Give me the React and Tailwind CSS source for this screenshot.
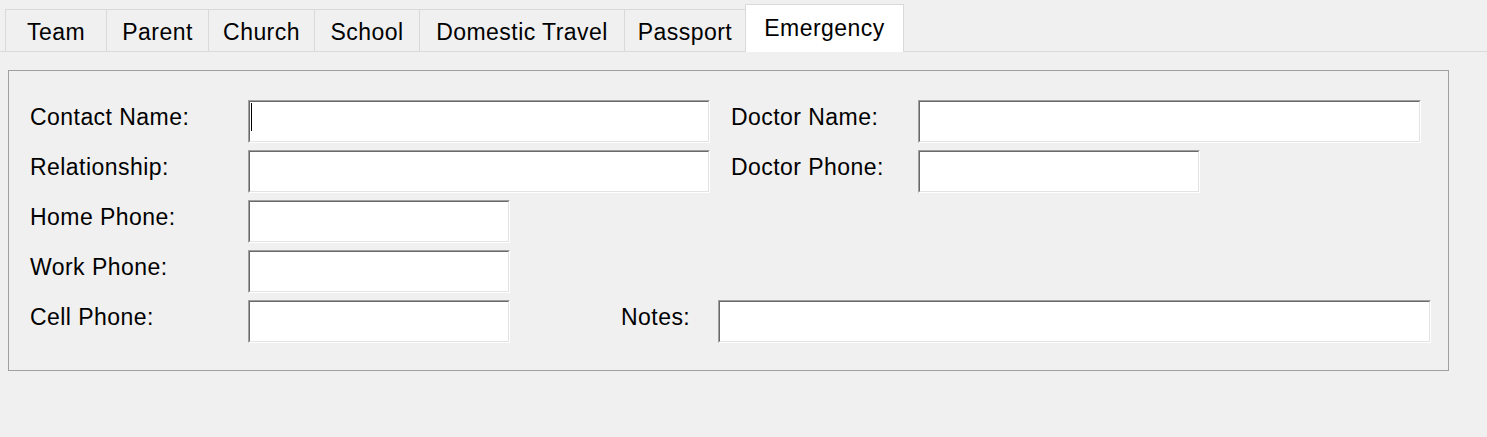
const tabs = [
  { name: 'Team', w: 'w-[101px]' },
  { name: 'Parent', w: 'w-[102px]' },
  { name: 'Church', w: 'w-[106px]' },
  { name: 'School', w: 'w-[105px]' },
  { name: 'Domestic Travel', w: 'w-[205px]' },
  { name: 'Passport', w: 'w-[121px]' },
];

// sunken 3D text box like a classic Windows edit control
const Field = ({ w, caret = false }) => (
  <div className={`${w} h-[43px] shrink-0 border-t border-l border-[#a0a0a0] border-b-white border-r-white border-b border-r`}>
    <div className="h-full w-full bg-white border-t border-l border-[#696969] border-b border-r border-b-[#e3e3e3] border-r-[#e3e3e3] pl-[1px] pt-[1px]">
      {caret && <div className="w-px h-[28px] bg-black" />}
    </div>
  </div>
);

const Label = ({ children, w }) => (
  <div className={`${w} shrink-0 pb-[8px] leading-none`}>{children}</div>
);

export default function App() {
  return (
    <div
      className="w-[1487px] h-[437px] bg-[#f0f0f0] text-black text-[23px] tracking-[0.45px] overflow-hidden"
      style={{ fontFamily: '"Liberation Sans", Arial, sans-serif' }}
    >
      {/* tab strip */}
      <div className="flex items-end h-[52px] pl-[5px] border-b border-[#dadada]">
        {tabs.map((t) => (
          <div
            key={t.name}
            className={`${t.w} h-[42px] shrink-0 flex items-center justify-center border-t border-l border-[#d9d9d9] pt-[3px] leading-none`}
          >
            {t.name}
          </div>
        ))}
        <div className="w-[159px] h-[48px] -mb-px shrink-0 flex items-start justify-center bg-white border-t border-l border-r border-[#d9d9d9] pt-[12px] leading-none">
          Emergency
        </div>
      </div>

      {/* group box */}
      <div className="ml-[8px] mt-[18px] w-[1441px] h-[301px] border border-[#a0a0a0] pl-[21px] pt-[29px]">
        <div className="flex flex-col gap-[7px]">
          <div className="flex items-center">
            <Label w="w-[218px]">Contact Name:</Label>
            <Field w="w-[462px]" caret />
            <div className="w-[21px]" />
            <Label w="w-[187px]">Doctor Name:</Label>
            <Field w="w-[503px]" />
          </div>
          <div className="flex items-center">
            <Label w="w-[218px]">Relationship:</Label>
            <Field w="w-[462px]" />
            <div className="w-[21px]" />
            <Label w="w-[187px]">Doctor Phone:</Label>
            <Field w="w-[282px]" />
          </div>
          <div className="flex items-center">
            <Label w="w-[218px]">Home Phone:</Label>
            <Field w="w-[262px]" />
          </div>
          <div className="flex items-center">
            <Label w="w-[218px]">Work Phone:</Label>
            <Field w="w-[262px]" />
          </div>
          <div className="flex items-center">
            <Label w="w-[218px]">Cell Phone:</Label>
            <Field w="w-[262px]" />
            <div className="w-[111px]" />
            <Label w="w-[97px]">Notes:</Label>
            <Field w="w-[713px]" />
          </div>
        </div>
      </div>
    </div>
  );
}
